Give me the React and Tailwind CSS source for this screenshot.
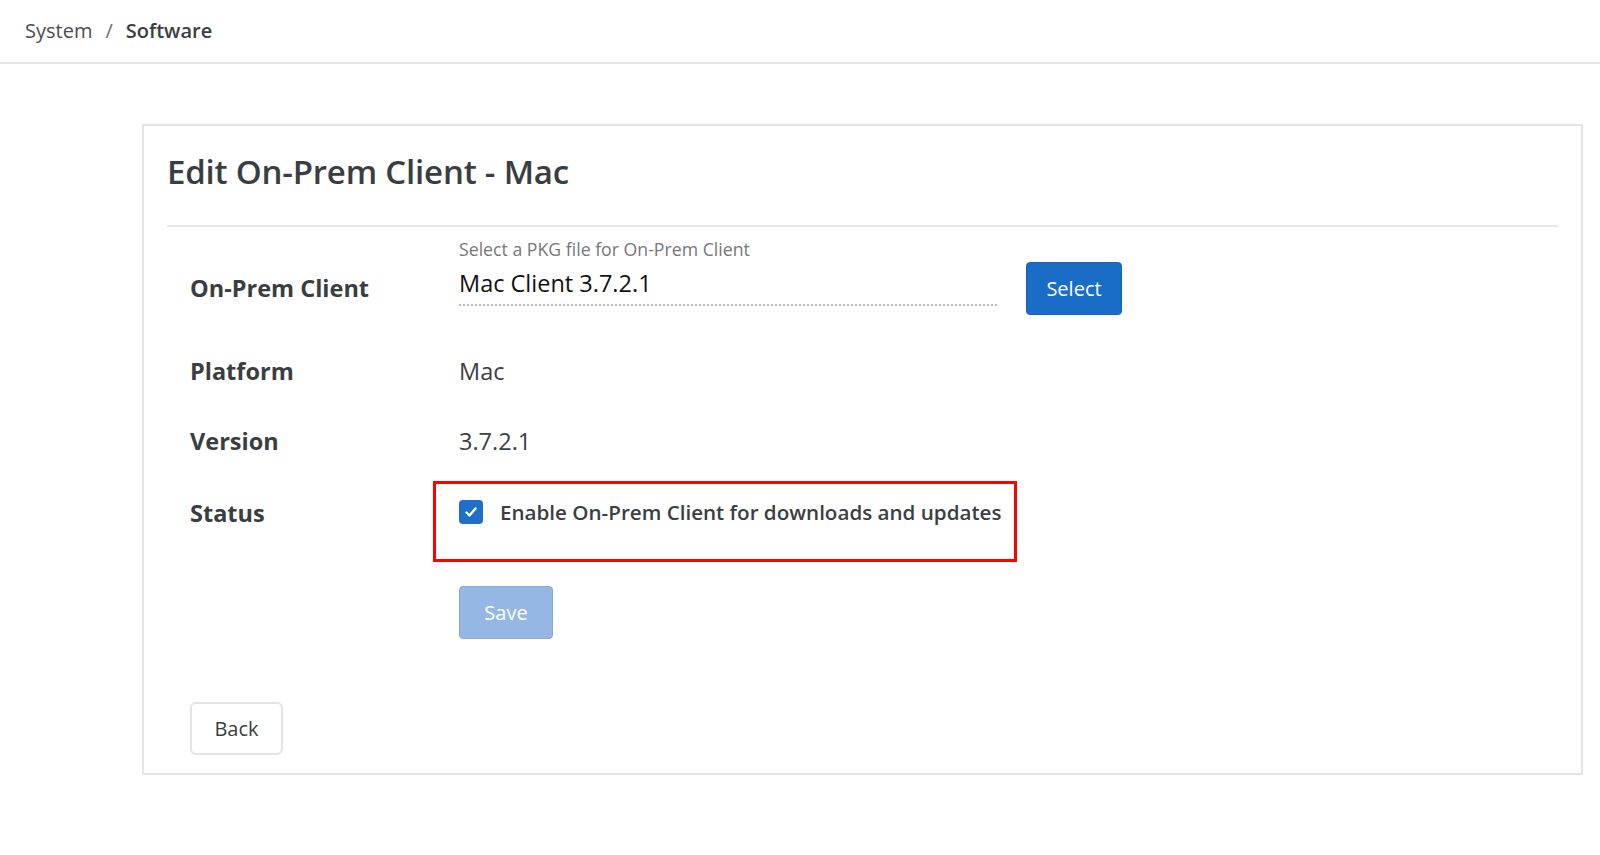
import React, { useState } from "react";

const App = () => {
  const [enabled, setEnabled] = useState(true);
  const [fileName] = useState("Mac Client 3.7.2.1");

  return (
    <div className="min-h-screen bg-white text-[#3b3e42]" style={{ fontFamily: '"Open Sans", "Liberation Sans", sans-serif' }}>
      {/* breadcrumb */}
      <div className="h-[64px] border-b-2 border-[#e6e7e9] flex items-center px-[25px] text-[20px]">
        <span className="text-[#4a4d52]">System</span>
        <span className="mx-[13px] text-[#6b6f75]">/</span>
        <span className="font-semibold text-[#3b3e42]">Software</span>
      </div>

      <div className="pl-[142px] pr-[17px] pt-[60px]">
        <div className="border-2 border-[#e4e4e4] px-[23px] pt-[25px] pb-[18px]">
          <h1 className="text-[33px] leading-[42px] font-semibold text-[#3a3d41] tracking-[-0.2px]">
            Edit On-Prem Client - Mac
          </h1>
          <div className="mt-[32px] border-t-2 border-[#e8e9eb]"></div>

          <div className="pl-[23px]">
            {/* on-prem client row */}
            <div className="mt-[10px] pl-[269px] text-[17.7px] leading-[25px] text-[#74777b]">
              Select a PKG file for On-Prem Client
            </div>
            <div className="flex items-center h-[53px]">
              <div className="w-[269px] text-[23.5px] font-bold text-[#3a3d41]">On-Prem Client</div>
              <div className="w-[538px] h-[43px] self-start mt-[1px] border-b-2 border-dotted border-[#b8bbbf] flex items-center">
                <span className="text-[23.5px] text-[#111]">{fileName}</span>
              </div>
              <button className="ml-[29px] w-[96px] h-[53px] rounded-[4px] bg-[#1a6dc7] border border-[#1762b4] text-white text-[20px] font-medium">
                Select
              </button>
            </div>

            {/* platform */}
            <div className="mt-[22px] h-[70px] flex items-center">
              <div className="w-[269px] text-[23.5px] font-bold text-[#3a3d41]">Platform</div>
              <div className="text-[23.5px] text-[#3d4044]">Mac</div>
            </div>

            {/* version */}
            <div className="h-[70px] flex items-center">
              <div className="w-[269px] text-[23.5px] font-bold text-[#3a3d41]">Version</div>
              <div className="text-[23.5px] text-[#3d4044]">3.7.2.1</div>
            </div>

            {/* status */}
            <div className="flex items-start">
              <div className="w-[269px] mt-[21px] leading-[30px] text-[23.5px] font-bold text-[#3a3d41]">Status</div>
              <div className="ml-[-26px] mt-[4px] w-[584px] h-[81px] border-[3px] border-[#f00] pl-[23px] pt-[13px]">
                <label className="flex items-center gap-[17px] cursor-pointer">
                  <span
                    onClick={() => setEnabled(!enabled)}
                    className={`w-[24px] h-[24px] rounded-[4px] flex items-center justify-center ${enabled ? "bg-[#1d6fca]" : "border-2 border-[#999] bg-white"}`}
                  >
                    {enabled && (
                      <svg width="16" height="16" viewBox="0 0 16 16" fill="none" stroke="white" strokeWidth="2.4" strokeLinecap="round" strokeLinejoin="round">
                        <polyline points="3.5,8.5 6.5,11.5 12.5,4.5" />
                      </svg>
                    )}
                  </span>
                  <span className="text-[20.6px] leading-[30px] font-semibold text-[#3b3e42]">
                    Enable On-Prem Client for downloads and updates
                  </span>
                </label>
              </div>
            </div>

            <div className="pl-[269px] mt-[24px]">
              <button disabled className="w-[94px] h-[53px] rounded-[4px] bg-[#94b7e4] border border-[#86a9d8] text-white text-[20px] font-medium">
                Save
              </button>
            </div>

            <div className="mt-[63px]">
              <button className="w-[93px] h-[53px] rounded-[6px] border-2 border-[#e2e3e5] bg-white text-[20px] text-[#3b3e42]">
                Back
              </button>
            </div>
          </div>
        </div>
      </div>
    </div>
  );
};

export default App;
